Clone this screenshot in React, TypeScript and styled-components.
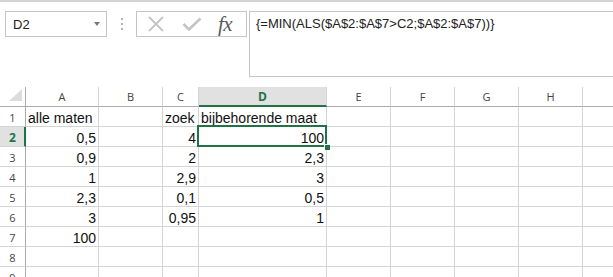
import React from 'react';
import styled, { createGlobalStyle, css } from 'styled-components';

const GREEN = '#217346';
const GRID = '#d4d4d4';
const HEAD_EDGE = '#ababab';

// the last column runs off the right edge; its letter is not visible
const COLS = ['A', 'B', 'C', 'D', 'E', 'F', 'G', 'H', ''];
const WIDTHS = [73, 64, 36, 128, 64, 64, 64, 64, 64];

type Cell = { v: string; num?: boolean };

const ROWS: Record<number, Record<string, Cell>> = {
  1: { A: { v: 'alle maten' }, C: { v: 'zoek' }, D: { v: 'bijbehorende maat' } },
  2: { A: { v: '0,5', num: true }, C: { v: '4', num: true }, D: { v: '100', num: true } },
  3: { A: { v: '0,9', num: true }, C: { v: '2', num: true }, D: { v: '2,3', num: true } },
  4: { A: { v: '1', num: true }, C: { v: '2,9', num: true }, D: { v: '3', num: true } },
  5: { A: { v: '2,3', num: true }, C: { v: '0,1', num: true }, D: { v: '0,5', num: true } },
  6: { A: { v: '3', num: true }, C: { v: '0,95', num: true }, D: { v: '1', num: true } },
  7: { A: { v: '100', num: true } },
  8: {},
  9: {},
};

const ACTIVE = { col: 'D', row: 2 };

const GlobalStyle = createGlobalStyle`
  html, body {
    margin: 0;
    background: #fff;
    overflow: hidden;
  }
  body {
    font-family: 'Liberation Sans', Arial, sans-serif;
  }
`;

const Page = styled.div`
  width: 613px;
  height: 277px;
  overflow: hidden;
  border-top: 2px solid #d5d5d5;
  box-sizing: border-box;
`;

const FormulaBar = styled.div`
  display: flex;
  align-items: flex-start;
  padding: 9px 0 0 5px;
  height: 75px;
  box-sizing: border-box;
`;

const NameBox = styled.div`
  width: 102px;
  height: 26px;
  box-sizing: border-box;
  border: 1px solid #c6c6c6;
  display: flex;
  align-items: center;
  justify-content: space-between;
  padding: 0 6px 0 7px;
  font-size: 13px;
  color: #222;
`;

const Caret = styled.span`
  width: 0;
  height: 0;
  border-left: 3.5px solid transparent;
  border-right: 3.5px solid transparent;
  border-top: 4px solid #777;
`;

const Grip = styled.div`
  display: flex;
  flex-direction: column;
  gap: 3px;
  margin: 7px 13px 0 14px;

  span {
    width: 2px;
    height: 2px;
    background: #b4b4b4;
  }
`;

const IconBox = styled.div`
  width: 111px;
  height: 26px;
  box-sizing: border-box;
  border: 1px solid #c6c6c6;
  display: flex;
  align-items: center;
  padding-left: 10px;
  gap: 17px;
`;

const Fx = styled.span`
  font-family: 'Liberation Serif', 'Times New Roman', serif;
  font-style: italic;
  font-size: 21px;
  color: #5a5a5a;
  letter-spacing: -0.5px;
  margin-left: -1px;
  line-height: 1;
`;

const FormulaInput = styled.div`
  flex: 1;
  margin-left: 2px;
  height: 66px;
  box-sizing: border-box;
  border: 1px solid #c6c6c6;
  border-right: none;
  padding: 4px 0 0 6px;
  font-size: 13px;
  color: #222;
`;

const Sheet = styled.div`
  margin-top: 10px;
  display: grid;
  grid-template-columns: 26px ${WIDTHS.map((w) => `${w}px`).join(' ')};
  grid-auto-rows: 20px;
`;

const Corner = styled.div`
  border-right: 1px solid ${HEAD_EDGE};
  border-bottom: 1px solid ${HEAD_EDGE};
  display: flex;
  align-items: flex-end;
  justify-content: flex-end;
  padding: 0 3px 5px 0;
  box-sizing: border-box;
`;

const ColHead = styled.div<{ $active?: boolean }>`
  box-sizing: border-box;
  border-right: 1px solid ${GRID};
  border-bottom: 1px solid ${HEAD_EDGE};
  display: flex;
  align-items: center;
  justify-content: center;
  font-family: 'Open Sans', sans-serif;
  font-size: 11px;
  color: #444;
  ${({ $active }) =>
    $active &&
    css`
      background: #e1e1e1;
      border-bottom: 2px solid ${GREEN};
      color: ${GREEN};
      font-weight: 700;
      font-size: 12px;
    `}
`;

const RowHead = styled.div<{ $active?: boolean }>`
  box-sizing: border-box;
  border-right: 1px solid ${HEAD_EDGE};
  border-bottom: 1px solid ${GRID};
  display: flex;
  align-items: center;
  justify-content: center;
  padding-top: 1px;
  font-family: 'Open Sans', sans-serif;
  font-size: 11px;
  color: #444;
  ${({ $active }) =>
    $active &&
    css`
      background: #e1e1e1;
      border-right: 2px solid ${GREEN};
      color: ${GREEN};
      font-weight: 700;
      font-size: 12px;
      padding-left: 1px;
    `}
`;

const DataCell = styled.div<{ $num?: boolean; $active?: boolean }>`
  position: relative;
  box-sizing: border-box;
  border-right: 1px solid ${GRID};
  border-bottom: 1px solid ${GRID};
  display: flex;
  align-items: flex-end;
  justify-content: ${({ $num }) => ($num ? 'flex-end' : 'flex-start')};
  padding: 0 2px;
  font-size: 14px;
  line-height: 16px;
  color: #111;
  white-space: nowrap;
  ${({ $active }) =>
    $active &&
    css`
      &::after {
        content: '';
        position: absolute;
        top: -2px;
        left: -2px;
        right: -1px;
        bottom: -1px;
        border: 2px solid ${GREEN};
        z-index: 1;
      }
    `}
`;

const FillHandle = styled.span`
  position: absolute;
  right: -4px;
  bottom: -4px;
  width: 5px;
  height: 5px;
  background: ${GREEN};
  border-left: 1px solid #fff;
  border-top: 1px solid #fff;
  z-index: 2;
`;

const CrossIcon = () => (
  <svg width="18" height="16" viewBox="0 0 18 16">
    <path d="M2 1 L16 15 M16 1 L2 15" stroke="#c4c4c4" strokeWidth="1.8" fill="none" />
  </svg>
);

const CheckIcon = () => (
  <svg width="20" height="14" viewBox="0 0 20 14">
    <path d="M1.5 7 L7 12.5 L18.5 1.5" stroke="#c4c4c4" strokeWidth="2.6" fill="none" />
  </svg>
);

const CornerMark = () => (
  <svg width="13" height="12" viewBox="0 0 13 12">
    <path d="M13 0 L13 12 L0 12 Z" fill="#dcdcdc" />
  </svg>
);

const App = () => (
  <Page>
    <GlobalStyle />
    <FormulaBar>
      <NameBox>
        D2
        <Caret />
      </NameBox>
      <Grip>
        <span />
        <span />
        <span />
      </Grip>
      <IconBox>
        <CrossIcon />
        <CheckIcon />
        <Fx>fx</Fx>
      </IconBox>
      <FormulaInput>{'{=MIN(ALS($A$2:$A$7>C2;$A$2:$A$7))}'}</FormulaInput>
    </FormulaBar>

    <Sheet>
      <Corner>
        <CornerMark />
      </Corner>
      {COLS.map((c, i) => (
        <ColHead key={i} $active={c === ACTIVE.col}>
          {c}
        </ColHead>
      ))}
      {Object.keys(ROWS).map((r) => {
        const row = Number(r);
        return (
          <React.Fragment key={r}>
            <RowHead $active={row === ACTIVE.row}>{row}</RowHead>
            {COLS.map((c, i) => {
              const cell = c ? ROWS[row][c] : undefined;
              const active = row === ACTIVE.row && c === ACTIVE.col;
              return (
                <DataCell key={i} $num={cell?.num} $active={active}>
                  {cell?.v}
                  {active && <FillHandle />}
                </DataCell>
              );
            })}
          </React.Fragment>
        );
      })}
    </Sheet>
  </Page>
);

export default App;
